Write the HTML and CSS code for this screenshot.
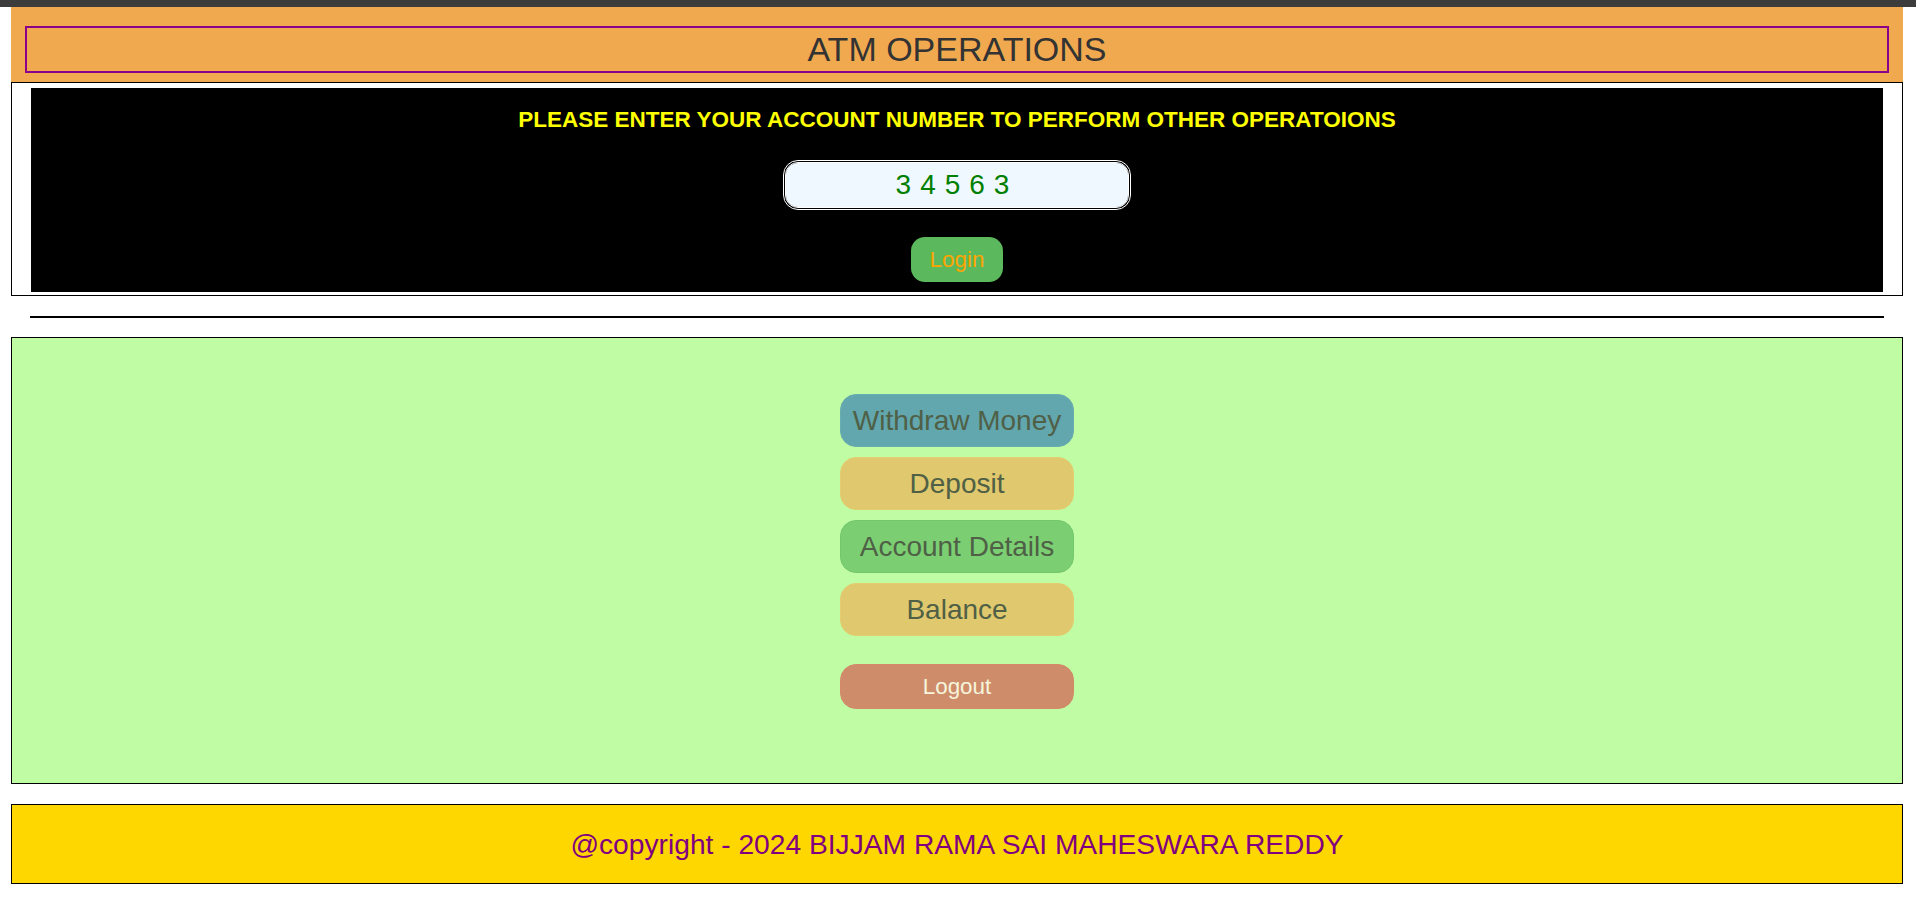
FILE: index.html
```html
<!DOCTYPE html>
<html lang="en">
<head>
<meta charset="utf-8">
<title>ATM Operations</title>
<link rel="stylesheet" href="styles.css">
</head>
<body>
<div class="topbar"></div>
<div class="page">
  <header class="header">
    <h1 class="title">ATM OPERATIONS</h1>
  </header>
  <section class="login-box">
    <div class="login-panel">
      <h3 class="prompt">PLEASE ENTER YOUR ACCOUNT NUMBER TO PERFORM OTHER OPERATOIONS</h3>
      <input class="acc-input" type="text" value="34563">
      <button class="login-btn">Login</button>
    </div>
  </section>
  <div class="rule"></div>
  <section class="ops">
    <button class="op op-withdraw">Withdraw Money</button>
    <button class="op op-deposit">Deposit</button>
    <button class="op op-details">Account Details</button>
    <button class="op op-balance">Balance</button>
    <button class="logout">Logout</button>
  </section>
  <footer class="footer">@copyright - 2024 BIJJAM RAMA SAI MAHESWARA REDDY</footer>
</div>
</body>
</html>
```
FILE: styles.css
```css
html, body {
  margin: 0;
  padding: 0;
  background: #ffffff;
  font-family: "Liberation Sans", Arial, sans-serif;
}

.topbar {
  height: 7px;
  background: #3c3c3c;
}

.page {
  margin: 0 13px 0 11px;
  display: flex;
  flex-direction: column;
}

.header {
  background: #f1a950;
  padding: 19px 14px 9px;
}

.title {
  margin: 0;
  border: 2px solid #8b008b;
  height: 43px;
  line-height: 43px;
  font-size: 34px;
  font-weight: normal;
  color: #333333;
  text-align: center;
}

.login-box {
  border: 1px solid #000000;
  padding: 5px 19px 3px;
}

.login-panel {
  background: #000000;
  padding: 19px 0 10px;
  display: flex;
  flex-direction: column;
  align-items: center;
  gap: 27px;
}

.prompt {
  margin: 0;
  font-size: 22.5px;
  line-height: 26px;
  font-weight: bold;
  color: #ffff00;
}

.acc-input {
  box-sizing: border-box;
  width: 348px;
  height: 50px;
  border: 3px double #ffffff;
  border-radius: 15px;
  background: #f0f8ff;
  background-clip: padding-box;
  color: #008000;
  font-family: "Liberation Sans", Arial, sans-serif;
  font-size: 28px;
  letter-spacing: 9px;
  text-align: center;
  padding: 0;
  outline: none;
}

.login-btn {
  border: none;
  border-radius: 14px;
  background: #5cb85c;
  color: #ffa500;
  font-family: "Liberation Sans", Arial, sans-serif;
  font-size: 22.4px;
  line-height: 25px;
  padding: 10px 19px;
}

.rule {
  height: 2px;
  background: #000000;
  margin: 20px 19px 19px;
}

.ops {
  background: #bffca3;
  border: 1px solid #000000;
  padding: 56px 0 74px;
  display: flex;
  flex-direction: column;
  align-items: center;
  gap: 10px;
}

.op {
  box-sizing: border-box;
  width: 234px;
  height: 53px;
  border-radius: 16px;
  border: 1px solid transparent;
  font-family: "Liberation Sans", Arial, sans-serif;
  font-size: 28px;
  color: #4f6046;
  padding: 0;
}

.op-withdraw {
  background: #62a6ae;
  border-color: #6aadb0;
}

.op-deposit,
.op-balance {
  background: #dfc86d;
  border-color: #e4cc6f;
}

.op-details {
  background: #7bcf72;
  border-color: #74c86c;
}

.logout {
  box-sizing: border-box;
  margin-top: 18px;
  width: 234px;
  height: 45px;
  border-radius: 16px;
  border: 1px solid #d48a68;
  background: #cf8c6b;
  color: #f5f5dc;
  font-family: "Liberation Sans", Arial, sans-serif;
  font-size: 22.4px;
  padding: 0;
}

.footer {
  margin-top: 20px;
  height: 78px;
  border: 1px solid #000000;
  background: #ffd700;
  color: #800080;
  font-size: 28.2px;
  display: flex;
  align-items: center;
  justify-content: center;
}
```
